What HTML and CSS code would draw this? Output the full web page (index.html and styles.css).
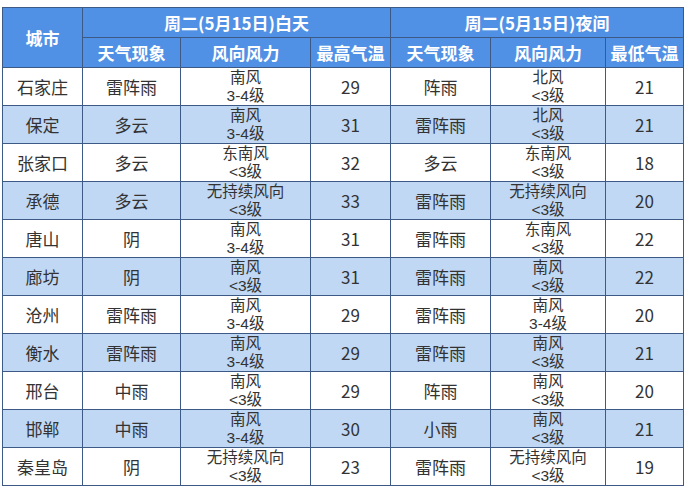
FILE: index.html
```html
<!DOCTYPE html>
<html lang="zh-CN">
<head>
<meta charset="utf-8">
<title>天气预报</title>
<link rel="stylesheet" href="styles.css">
</head>
<body>
<table class="wx">
  <colgroup>
    <col class="c-city"><col class="c-w1"><col class="c-f1"><col class="c-t1">
    <col class="c-w2"><col class="c-f2"><col class="c-t2">
  </colgroup>
  <thead>
    <tr class="h1">
      <th rowspan="2">城市</th>
      <th colspan="3">周二(5月15日)白天</th>
      <th colspan="3">周二(5月15日)夜间</th>
    </tr>
    <tr class="h2">
      <th>天气现象</th><th>风向风力</th><th>最高气温</th>
      <th>天气现象</th><th>风向风力</th><th>最低气温</th>
    </tr>
  </thead>
  <tbody>
    <tr><td>石家庄</td><td>雷阵雨</td><td class="wind">南风<br>3-4级</td><td>29</td><td>阵雨</td><td class="wind">北风<br>&lt;3级</td><td>21</td></tr>
    <tr class="alt"><td>保定</td><td>多云</td><td class="wind">南风<br>3-4级</td><td>31</td><td>雷阵雨</td><td class="wind">北风<br>&lt;3级</td><td>21</td></tr>
    <tr><td>张家口</td><td>多云</td><td class="wind">东南风<br>&lt;3级</td><td>32</td><td>多云</td><td class="wind">东南风<br>&lt;3级</td><td>18</td></tr>
    <tr class="alt"><td>承德</td><td>多云</td><td class="wind">无持续风向<br>&lt;3级</td><td>33</td><td>雷阵雨</td><td class="wind">无持续风向<br>&lt;3级</td><td>20</td></tr>
    <tr><td>唐山</td><td>阴</td><td class="wind">南风<br>3-4级</td><td>31</td><td>雷阵雨</td><td class="wind">东南风<br>&lt;3级</td><td>22</td></tr>
    <tr class="alt"><td>廊坊</td><td>阴</td><td class="wind">南风<br>&lt;3级</td><td>31</td><td>雷阵雨</td><td class="wind">南风<br>&lt;3级</td><td>22</td></tr>
    <tr><td>沧州</td><td>雷阵雨</td><td class="wind">南风<br>3-4级</td><td>29</td><td>雷阵雨</td><td class="wind">南风<br>3-4级</td><td>20</td></tr>
    <tr class="alt"><td>衡水</td><td>雷阵雨</td><td class="wind">南风<br>3-4级</td><td>29</td><td>雷阵雨</td><td class="wind">南风<br>&lt;3级</td><td>21</td></tr>
    <tr><td>邢台</td><td>中雨</td><td class="wind">南风<br>&lt;3级</td><td>29</td><td>阵雨</td><td class="wind">南风<br>&lt;3级</td><td>20</td></tr>
    <tr class="alt"><td>邯郸</td><td>中雨</td><td class="wind">南风<br>3-4级</td><td>30</td><td>小雨</td><td class="wind">南风<br>&lt;3级</td><td>21</td></tr>
    <tr><td>秦皇岛</td><td>阴</td><td class="wind">无持续风向<br>&lt;3级</td><td>23</td><td>雷阵雨</td><td class="wind">无持续风向<br>&lt;3级</td><td>19</td></tr>
  </tbody>
</table>
</body>
</html>
```

FILE: styles.css
```css
html, body {
  margin: 0;
  padding: 0;
  background: #ffffff;
}

body {
  padding: 7px 0 0 2px;
  font-family: "Noto Sans CJK SC", "Noto Sans", sans-serif;
}

.wx {
  border-collapse: collapse;
  table-layout: fixed;
  width: 681px;
  color: #333333;
}

.c-city { width: 80px; }
.c-w1 { width: 98px; }
.c-f1 { width: 130px; }
.c-t1 { width: 80px; }
.c-w2 { width: 100px; }
.c-f2 { width: 115px; }
.c-t2 { width: 78px; }

.wx th,
.wx td {
  border: 1px solid #3d5a86;
  text-align: center;
  vertical-align: middle;
  padding: 0;
}

.wx th {
  background: #5191e5;
  color: #ffffff;
  font-weight: bold;
  font-size: 17px;
  height: 29px;
  line-height: 20px;
}

.wx td {
  font-size: 17px;
  height: 37px;
  line-height: 20px;
}

.wx td.wind {
  font-family: "Liberation Sans", "Noto Sans CJK SC", sans-serif;
  line-height: 17.5px;
  font-size: 15.5px;
}

.wx tr.alt td {
  background: #c0d8f4;
}
```
